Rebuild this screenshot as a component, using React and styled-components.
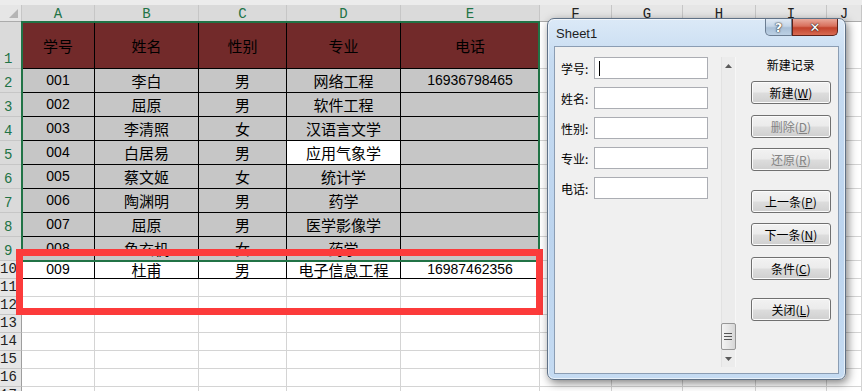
import React from 'react'
import styled, { createGlobalStyle } from 'styled-components'

const GlobalStyle = createGlobalStyle`
	body {
		margin: 0;
		background: #fff;
		font-family: "Noto Sans CJK SC", sans-serif;
	}
`

const COLS = ['A', 'B', 'C', 'D', 'E', 'F', 'G', 'H', 'I', 'J']

const DATA = [
	['学号', '姓名', '性别', '专业', '电话'],
	['001', '李白', '男', '网络工程', '16936798465'],
	['002', '屈原', '男', '软件工程', ''],
	['003', '李清照', '女', '汉语言文学', ''],
	['004', '白居易', '男', '应用气象学', ''],
	['005', '蔡文姬', '女', '统计学', ''],
	['006', '陶渊明', '男', '药学', ''],
	['007', '屈原', '男', '医学影像学', ''],
	['008', '鱼玄机', '女', '药学', ''],
	['009', '杜甫', '男', '电子信息工程', '16987462356'],
]

const ROW_COUNT = 17

const Page = styled.div`
	position: relative;
	width: 862px;
	height: 391px;
	overflow: hidden;
	background: #fff;
`

const TopStrip = styled.div`
	height: 5px;
	background: #ececec;
`

const Sheet = styled.div`
	display: grid;
	grid-template-columns: 22px 73px 104px 88px 114px 139px 72px 71px 73px 71px 1fr;
	grid-template-rows: 17px 47px repeat(8, 24px) repeat(7, 18px);
`

const Corner = styled.div`
	position: relative;
	background: #e6e6e6;
	border-right: 1px solid #c6c6c6;
	border-bottom: 1px solid #ababab;
	box-sizing: border-box;

	&::after {
		content: '';
		position: absolute;
		right: 3px;
		bottom: 3px;
		border-left: 9px solid transparent;
		border-bottom: 9px solid #b5b5b5;
	}
`

const ColHead = styled.div`
	display: flex;
	align-items: center;
	justify-content: center;
	box-sizing: border-box;
	background: ${p => (p.$sel ? '#dadada' : '#e6e6e6')};
	border-right: 1px solid #c6c6c6;
	border-bottom: 1px solid #ababab;
	color: ${p => (p.$sel ? '#217346' : '#222')};
	font-family: "Liberation Mono", monospace;
	font-size: 14px;
	line-height: 1;
	padding-top: 2px;
`

const RowHead = styled.div`
	display: flex;
	align-items: flex-end;
	box-sizing: border-box;
	padding: 0 0 1px ${p => (p.$wide ? '0' : '4px')};
	background: ${p => (p.$sel ? '#dadada' : '#e6e6e6')};
	border-right: 1px solid #9e9e9e;
	border-bottom: 1px solid #c6c6c6;
	color: ${p => (p.$sel ? '#217346' : '#222')};
	font-family: "Liberation Mono", monospace;
	font-size: 14px;
	line-height: 16px;
	overflow: hidden;
`

const CELL_BG = {
	head: '#722a2a',
	sel: '#c6c6c6',
	active: '#ffffff',
	table: '#ffffff',
	plain: '#ffffff',
}

const Cell = styled.div`
	display: flex;
	align-items: center;
	justify-content: center;
	box-sizing: border-box;
	background: ${p => CELL_BG[p.$kind]};
	border-right: 1px solid ${p => (p.$kind === 'plain' ? '#d4d4d4' : '#000')};
	border-bottom: 1px solid ${p => (p.$kind === 'plain' ? '#d4d4d4' : '#000')};
	color: #000;
	font-family: ${p => (p.$mono ? '"Liberation Sans", sans-serif' : '"Noto Sans CJK SC", sans-serif')};
	font-size: ${p => (p.$mono ? '14px' : '15px')};
	line-height: 15px;
	white-space: nowrap;
`

const Selection = styled.div`
	position: absolute;
	left: 21px;
	top: 21px;
	width: 519px;
	height: 241px;
	border: 2px solid #217346;
	box-sizing: border-box;
	pointer-events: none;
`

const Highlight = styled.div`
	position: absolute;
	left: 16px;
	top: 249px;
	width: 527px;
	height: 66px;
	border: 7px solid #fc3b3b;
	box-sizing: border-box;
`

/* dialog */

const Dialog = styled.div`
	position: absolute;
	left: 547px;
	top: 18px;
	width: 299px;
	height: 362px;
	box-sizing: border-box;
	display: flex;
	flex-direction: column;
	padding: 0 6px 5px 6px;
	border: 1px solid #5f7186;
	border-radius: 7px;
	background: linear-gradient(to bottom, #dbe9f7 0%, #c6dbf1 12%, #bcd4ee 60%, #c5dbf2 100%);
	box-shadow: 2px 3px 10px rgba(0, 0, 0, 0.5), inset 0 0 0 1px rgba(255, 255, 255, 0.6);
`

const TitleBar = styled.div`
	display: flex;
	align-items: flex-start;
	height: 27px;
`

const Title = styled.div`
	margin: 7px 0 0 2px;
	font-family: "Liberation Sans", sans-serif;
	font-size: 13px;
	line-height: 16px;
	color: #1e1e1e;
`

const Caption = styled.div`
	display: flex;
	margin-left: auto;
	margin-right: 1px;
`

const CapButton = styled.div`
	display: flex;
	align-items: center;
	justify-content: center;
	width: ${p => (p.$close ? '46px' : '27px')};
	height: 17px;
	box-sizing: border-box;
	border: 1px solid ${p => (p.$close ? '#5e2219' : '#6b7d92')};
	border-top: none;
	border-radius: ${p => (p.$close ? '0 0 5px 0' : '0 0 0 5px')};
	background: ${p =>
		p.$close
			? 'linear-gradient(to bottom, #e9a899 0%, #d8705c 45%, #c2432c 55%, #d86a52 100%)'
			: 'linear-gradient(to bottom, #dfe9f4 0%, #c4d5e7 45%, #a9bfd6 55%, #bcd0e4 100%)'};
	color: #fff;
	font-family: "DejaVu Sans", sans-serif;
	font-weight: bold;
	font-size: 13px;
	line-height: 1;
	text-shadow: 0 0 2px #2d2d2d, 0 0 1px #000;
`

const Client = styled.div`
	flex: 1;
	display: flex;
	align-items: flex-start;
	padding: 10px 7px 0 6px;
	border: 1px solid #8b9db3;
	background: #f0f0f0;
`

const Fields = styled.div`
	display: flex;
	flex-direction: column;
	gap: 8px;
	width: 147px;
`

const FieldRow = styled.div`
	display: flex;
	align-items: center;
	height: 22px;
`

const Label = styled.div`
	width: 33px;
	font-size: 12px;
	color: #000;
`

const Input = styled.div`
	display: flex;
	align-items: center;
	width: 114px;
	height: 22px;
	box-sizing: border-box;
	border: 1px solid #abadb3;
	background: #fff;
`

const Caret = styled.span`
	width: 1px;
	height: 15px;
	margin-left: 4px;
	background: #000;
`

const ScrollBar = styled.div`
	display: flex;
	flex-direction: column;
	width: 15px;
	height: 310px;
	margin-left: 13px;
	background: #ececec;
	border-left: 1px solid #e2e2e2;
	border-right: 1px solid #f7f7f7;
	box-sizing: border-box;
`

const Arrow = styled.div`
	display: flex;
	align-items: center;
	justify-content: center;
	height: 17px;
`

const Spacer = styled.div`
	flex: 1;
`

const Thumb = styled.div`
	display: flex;
	align-items: center;
	justify-content: center;
	height: 25px;
	margin: 0 -1px;
	border: 1px solid #979797;
	border-radius: 2px;
	background: linear-gradient(to right, #f3f3f3, #e6e6e6 50%, #d6d6d6);
`

const Buttons = styled.div`
	display: flex;
	flex-direction: column;
	width: 82px;
	margin-left: 15px;
`

const ButtonsTitle = styled.div`
	height: 24px;
	text-align: center;
	font-size: 12px;
	line-height: 16px;
	color: #000;
`

const Button = styled.div`
	display: flex;
	align-items: center;
	justify-content: center;
	height: 23px;
	margin-top: ${p => p.$gap || 0}px;
	box-sizing: border-box;
	border: 1px solid #707070;
	border-radius: 3px;
	background: linear-gradient(to bottom, #f2f2f2 0%, #ebebeb 48%, #dddddd 52%, #cfcfcf 100%);
	box-shadow: inset 0 0 0 1px #fbfbfb;
	font-size: 12px;
	color: ${p => (p.$disabled ? '#838383' : '#000')};

	& u {
		text-underline-offset: 1px;
	}
`

const FIELDS = ['学号', '姓名', '性别', '专业', '电话']

const ACTIONS = [
	{ label: '新建', key: 'W', gap: 0 },
	{ label: '删除', key: 'D', gap: 11, disabled: true },
	{ label: '还原', key: 'R', gap: 10, disabled: true },
	{ label: '上一条', key: 'P', gap: 19 },
	{ label: '下一条', key: 'N', gap: 10 },
	{ label: '条件', key: 'C', gap: 11 },
	{ label: '关闭', key: 'L', gap: 18 },
]

const cellKind = (r, c) => {
	if (r > 10 || c > 4) return 'plain'
	if (r === 1) return 'head'
	if (r === 10) return 'table'
	if (r === 5 && c === 3) return 'active'
	return 'sel'
}

const UpArrow = () => (
	<svg width="7" height="4" viewBox="0 0 7 4">
		<path d="M0 4 L3.5 0 L7 4 Z" fill="#5a5a5a" />
	</svg>
)

const DownArrow = () => (
	<svg width="7" height="4" viewBox="0 0 7 4">
		<path d="M0 0 L3.5 4 L7 0 Z" fill="#5a5a5a" />
	</svg>
)

const Grip = () => (
	<svg width="8" height="7" viewBox="0 0 8 7">
		<path d="M0 0.5 H8 M0 3.5 H8 M0 6.5 H8" stroke="#555" strokeWidth="1" />
	</svg>
)

const App = () => {
	const rows = []
	for (let r = 1; r <= ROW_COUNT; r++) {
		rows.push(
			<RowHead key={`h${r}`} $sel={r <= 9} $wide={r >= 10}>{r}</RowHead>
		)
		COLS.forEach((col, c) => {
			const value = r <= 10 && c < 5 ? DATA[r - 1][c] : ''
			rows.push(
				<Cell key={`${col}${r}`} $kind={cellKind(r, c)} $mono={/^\d+$/.test(value)}>
					{value}
				</Cell>
			)
		})
	}

	return (
		<Page>
			<GlobalStyle />
			<TopStrip />
			<Sheet>
				<Corner />
				{COLS.map((col, c) => (
					<ColHead key={col} $sel={c < 5}>{col}</ColHead>
				))}
				{rows}
			</Sheet>
			<Selection />
			<Highlight />

			<Dialog>
				<TitleBar>
					<Title>Sheet1</Title>
					<Caption>
						<CapButton>?</CapButton>
						<CapButton $close>✕</CapButton>
					</Caption>
				</TitleBar>
				<Client>
					<Fields>
						{FIELDS.map((name, i) => (
							<FieldRow key={name}>
								<Label>{name}:</Label>
								<Input>{i === 0 && <Caret />}</Input>
							</FieldRow>
						))}
					</Fields>
					<ScrollBar>
						<Arrow><UpArrow /></Arrow>
						<Spacer />
						<Thumb><Grip /></Thumb>
						<Arrow><DownArrow /></Arrow>
					</ScrollBar>
					<Buttons>
						<ButtonsTitle>新建记录</ButtonsTitle>
						{ACTIONS.map(a => (
							<Button key={a.key} $gap={a.gap} $disabled={a.disabled}>
								{a.label}(<u>{a.key}</u>)
							</Button>
						))}
					</Buttons>
				</Client>
			</Dialog>
		</Page>
	)
}

export default App
